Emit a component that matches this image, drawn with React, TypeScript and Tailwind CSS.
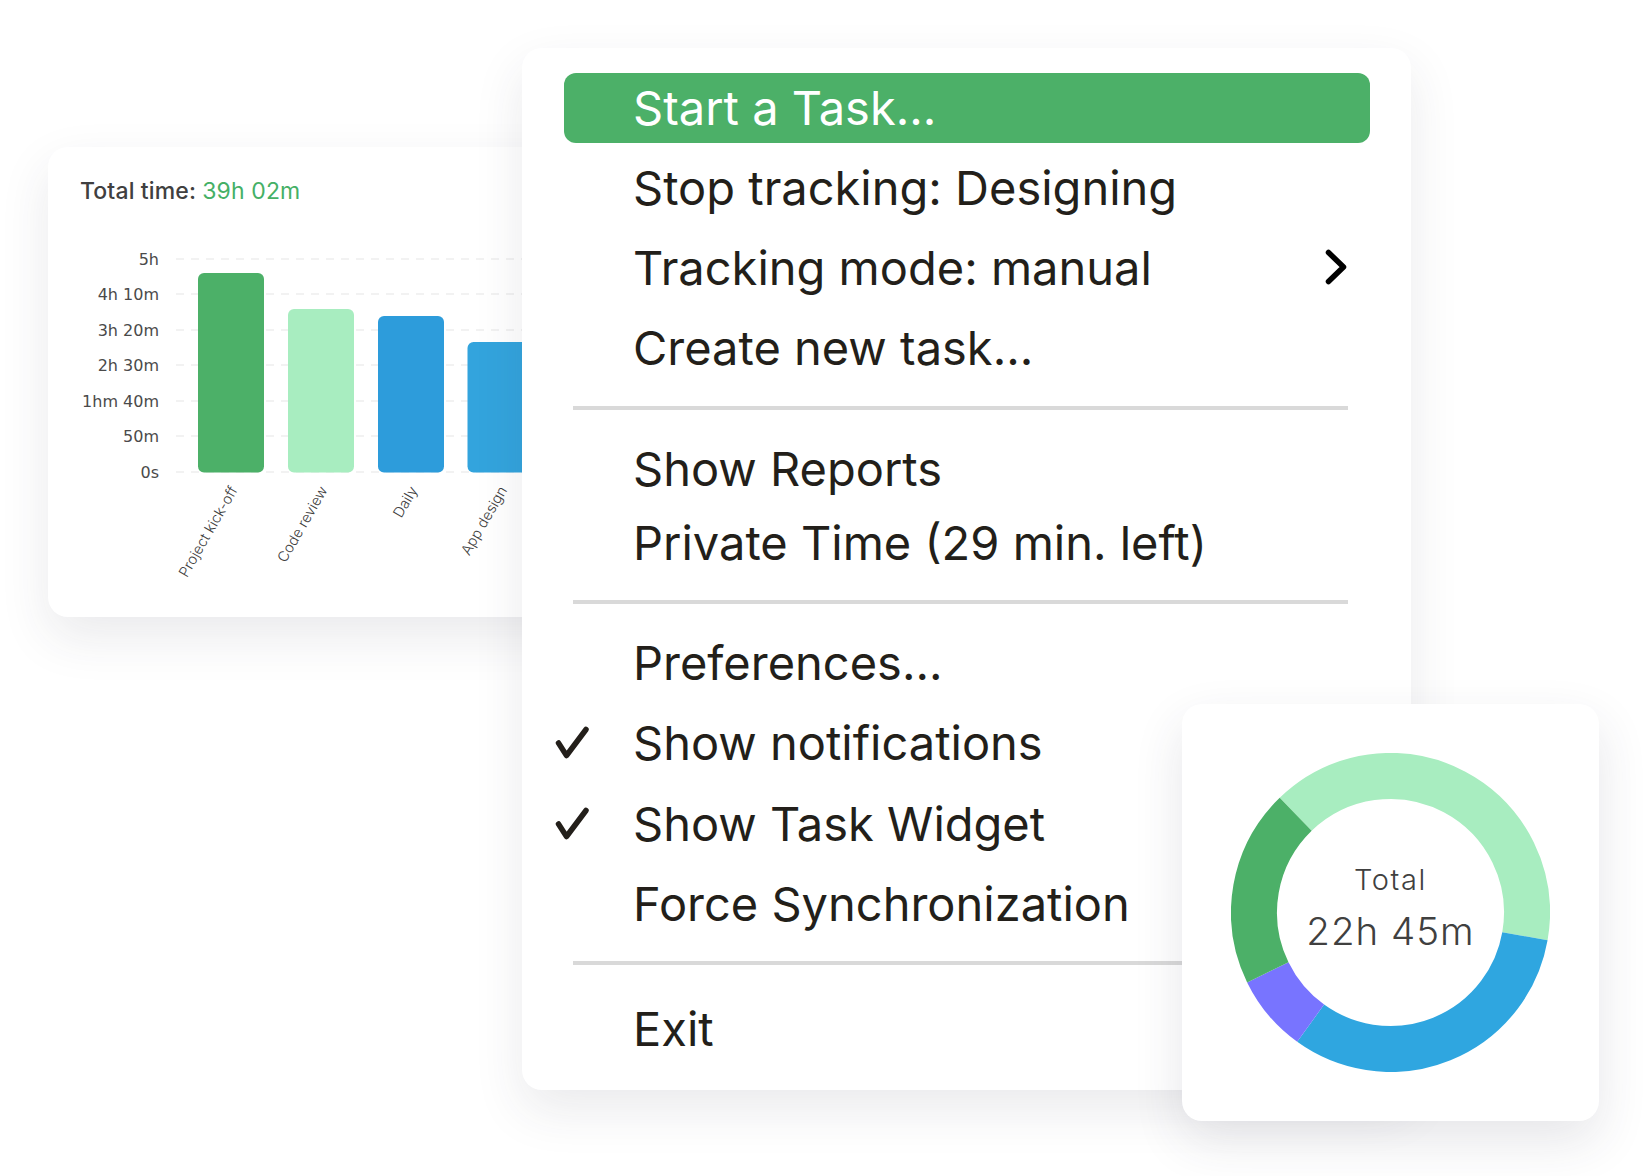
const ticks = [
  { label: "5h", y: 19 },
  { label: "4h 10m", y: 54 },
  { label: "3h 20m", y: 90 },
  { label: "2h 30m", y: 125 },
  { label: "1hm 40m", y: 161 },
  { label: "50m", y: 196 },
  { label: "0s", y: 232 },
];

const bars = [
  { name: "Project kick-off", x: 117, top: 33, color: "#4cb068" },
  { name: "Code review", x: 207, top: 69, color: "#a8edc0" },
  { name: "Daily", x: 297, top: 76, color: "#2d9cdb" },
  { name: "App design", x: 386.5, top: 102, color: "#33a4dd" },
];

// donut segments, angles clockwise from 3 o'clock
const segments = [
  { from: 226, to: 370, color: "#a8edc0" },
  { from: 10, to: 125.8, color: "#2fa6e0" },
  { from: 125.8, to: 154, color: "#7874ff" },
  { from: 154, to: 226, color: "#4cb068" },
];

const arcPath = (from: number, to: number) => {
  const cx = 159.5;
  const cy = 159.5;
  const r = 136.5;
  const a = (from * Math.PI) / 180;
  const b = (to * Math.PI) / 180;
  const large = to - from > 180 ? 1 : 0;
  return `M ${cx + r * Math.cos(a)} ${cy + r * Math.sin(a)} A ${r} ${r} 0 ${large} 1 ${cx + r * Math.cos(b)} ${cy + r * Math.sin(b)}`;
};

const MenuItem = ({ label, height = "h-[80.5px]", checked = false, chevron = false }: { label: string; height?: string; checked?: boolean; chevron?: boolean }) => (
  <div className={`relative flex items-center pl-[110px] ${height}`}>
    {checked && (
      <svg className="absolute left-[32px] top-[23px]" width="34" height="33" viewBox="0 0 34 33" fill="none">
        <path d="M3.5 17 L11.5 29.5 L31 3.5" stroke="#231f1a" strokeWidth="5.5" strokeLinecap="round" strokeLinejoin="round" />
      </svg>
    )}
    <span>{label}</span>
    {chevron && (
      <svg className="absolute left-[801px] top-[21px]" width="24" height="36" viewBox="0 0 24 36" fill="none">
        <path d="M4.5 3.5 L19.5 18 L4.5 32.5" stroke="#000000" strokeWidth="5.5" strokeLinecap="round" strokeLinejoin="round" />
      </svg>
    )}
  </div>
);

const Divider = ({ className }: { className: string }) => (
  <div className={`ml-[50px] h-1 w-[775px] bg-[#d9d9d9] ${className}`} />
);

const App = () => {
  return (
    <div className="relative h-[1176px] w-[1643px] overflow-hidden bg-white pl-[523px] pt-[48px]">
      {/* Chart card, behind the menu */}
      <div className="absolute left-[48px] top-[147px] h-[470px] w-[540px] rounded-[20px] bg-white pl-[32px] pt-[29px] shadow-[0_20px_50px_rgba(50,50,70,0.1)]">
        <div className="h-[30px] font-['Inter',sans-serif] text-[23px] font-medium leading-[30px] tracking-[0.13px] text-[#404040]">
          Total time: <span className="font-normal text-[#45b066]">39h 02m</span>
        </div>
        <svg className="mt-[34px] ml-[1px] block" width="460" height="380" viewBox="0 0 460 380">
          {ticks.map((t) => (
            <g key={t.label}>
              <line x1="95" x2="460" y1={t.y} y2={t.y} stroke="#eeeeee" strokeWidth="1.5" strokeDasharray="8 7" />
              <text x="78" y={t.y + 5.5} textAnchor="end" fontSize="16" fill="#4a4a4a" className="font-['DejaVu_Sans',sans-serif]">
                {t.label}
              </text>
            </g>
          ))}
          {bars.map((b) => (
            <g key={b.name}>
              <rect x={b.x} y={b.top} width="66" height={232.5 - b.top} rx="6" fill={b.color} />
              <text
                x={b.x + 40}
                y="250"
                textAnchor="end"
                fontSize="14.5"
                fill="#404040"
                transform={`rotate(-60 ${b.x + 40} 250)`}
                className="font-['Inter',sans-serif] font-light"
              >
                {b.name}
              </text>
            </g>
          ))}
        </svg>
      </div>

      {/* Tray menu */}
      <div className="relative -ml-[1px] w-[889px] rounded-[20px] bg-white pb-[20px] pt-[25px] font-['Inter',sans-serif] text-[47px] text-[#231f1a] shadow-[0_20px_50px_rgba(50,50,70,0.1)]">
        <div className="ml-[42px] flex h-[70px] w-[806px] items-center rounded-[12px] bg-[#4cb068] pl-[69px] text-white">
          Start a Task...
        </div>
        <div className="mt-[5px] pl-[1px]">
          <MenuItem label="Stop tracking: Designing" height="h-[80px]" />
          <MenuItem label="Tracking mode: manual" height="h-[80px]" chevron />
          <MenuItem label="Create new task..." height="h-[80px]" />
        </div>
        <Divider className="mt-[18px] translate-x-[1px]" />
        <div className="mt-[22px] pl-[1px]">
          <MenuItem label="Show Reports" height="h-[74px]" />
          <MenuItem label="Private Time (29 min. left)" height="h-[74px]" />
        </div>
        <Divider className="mt-[20px] translate-x-[1px]" />
        <div className="mt-[18.5px] pl-[1px]">
          <MenuItem label="Preferences..." />
          <MenuItem label="Show notifications" checked />
          <MenuItem label="Show Task Widget" checked />
          <MenuItem label="Force Synchronization" />
        </div>
        <Divider className="mt-[16.5px] translate-x-[1px]" />
        <div className="mt-[24px] pl-[1px]">
          <MenuItem label="Exit" />
        </div>
      </div>

      {/* Donut card, over the menu */}
      <div className="absolute left-[1182px] top-[704px] flex h-[417px] w-[417px] items-center justify-center rounded-[20px] bg-white shadow-[0_20px_50px_rgba(50,50,70,0.12)]">
        <div className="relative h-[319px] w-[319px]">
          <svg width="319" height="319" viewBox="0 0 319 319" fill="none">
            {segments.map((s) => (
              <path key={s.color} d={arcPath(s.from, s.to)} stroke={s.color} strokeWidth="46" />
            ))}
          </svg>
          <div className="absolute inset-0 flex flex-col items-center justify-center pb-[9px] font-['Inter',sans-serif] text-[#404040]">
            <span className="text-[29px] font-light leading-[40px] tracking-[1.6px]">Total</span>
            <span className="mt-[6px] text-[38.5px] font-light leading-[50px] tracking-[1px]">22h 45m</span>
          </div>
        </div>
      </div>
    </div>
  );
};

export default App;
